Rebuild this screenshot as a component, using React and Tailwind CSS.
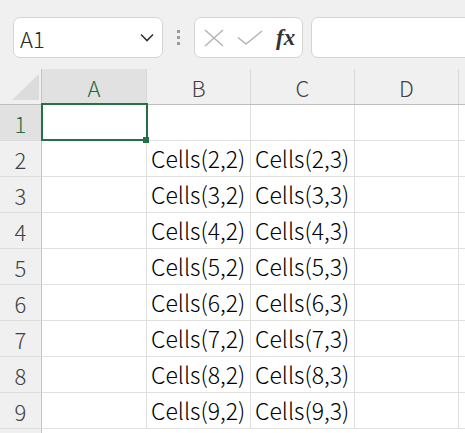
import React from "react";

const font = { fontFamily: '"Noto Sans CJK JP", "Noto Sans", sans-serif' };

const cols = [
  { key: "A", w: "w-[105px]", selected: true },
  { key: "B", w: "w-[104px]" },
  { key: "C", w: "w-[104px]" },
  { key: "D", w: "w-[104px]" },
];

const rows = [1, 2, 3, 4, 5, 6, 7, 8, 9];

const cellText = (r, c) => {
  if (r < 2) return "";
  if (c === "B") return `Cells(${r},2)`;
  if (c === "C") return `Cells(${r},3)`;
  return "";
};

const NameBox = () => (
  <div className="flex h-[41px] w-[150px] shrink-0 items-center justify-between rounded-[7px] border border-[#d4d4d4] bg-white pl-[6px] pr-[8px]">
    <span className="text-[22px] font-light leading-none text-[#262626]">A1</span>
    <svg width="14" height="9" viewBox="0 0 14 9" fill="none">
      <path d="M1 1.5 L7 7.5 L13 1.5" stroke="#333" strokeWidth="1.6" />
    </svg>
  </div>
);

const Dots = () => (
  <div className="flex h-[41px] w-[31px] shrink-0 flex-col items-center justify-center gap-[3px]">
    <span className="h-[3px] w-[3px] bg-[#9a9a9a]" />
    <span className="h-[3px] w-[3px] bg-[#9a9a9a]" />
    <span className="h-[3px] w-[3px] bg-[#9a9a9a]" />
  </div>
);

const FxBox = () => (
  <div className="flex h-[41px] w-[109px] shrink-0 items-center rounded-[7px] border border-[#d4d4d4] bg-white pl-[9px]">
    <svg width="20" height="18" viewBox="0 0 20 18" fill="none">
      <path d="M1 1 L19 17 M19 1 L1 17" stroke="#b4b4b4" strokeWidth="1.5" />
    </svg>
    <svg className="ml-[13px]" width="26" height="16" viewBox="0 0 26 16" fill="none">
      <path d="M1 7.5 L9 14 L25 1" stroke="#b4b4b4" strokeWidth="1.5" />
    </svg>
    <span
      className="ml-[13px] text-[23px] font-bold italic leading-none text-[#333]"
      style={{ fontFamily: '"Liberation Serif", "DejaVu Serif", serif' }}
    >
      fx
    </span>
  </div>
);

export default function App() {
  return (
    <div className="relative h-[433px] w-[465px] overflow-hidden bg-[#f0f0f0]" style={font}>
      {/* toolbar */}
      <div className="flex h-[69px] items-start pl-[13px] pt-[17px]">
        <NameBox />
        <Dots />
        <FxBox />
        <div className="ml-[8px] h-[41px] w-[200px] shrink-0 rounded-[7px] border border-[#d4d4d4] bg-white" />
      </div>

      {/* column headers */}
      <div className="flex h-[36px] border-b border-[#bdbdbd]">
        <div className="relative w-[42px] shrink-0 border-r border-[#c4c4c4]">
          <svg className="absolute left-[12px] top-[5px]" width="27" height="26" viewBox="0 0 27 26">
            <polygon points="27,0 27,26 0,26" fill="#dcdcdc" />
          </svg>
        </div>
        {cols.map((c) => (
          <div
            key={c.key}
            className={`${c.w} flex shrink-0 items-center justify-center border-r border-[#d9d9d9] text-[22px] font-light leading-none ${
              c.selected ? "bg-[#e1e1e1] text-[#1e6e42]" : "text-[#404040]"
            }`}
          >
            {c.key}
          </div>
        ))}
        <div className="flex-1" />
      </div>

      {/* rows */}
      {rows.map((r) => (
        <div key={r} className="flex h-[36px]">
          <div
            className={`flex w-[42px] shrink-0 items-center justify-center border-b border-r border-b-[#dcdcdc] border-r-[#c4c4c4] text-[22px] font-light leading-none ${
              r === 1 ? "bg-[#e1e1e1] text-[#1e6e42]" : "text-[#404040]"
            }`}
          >
            {r}
          </div>
          {cols.map((c) => (
            <div
              key={c.key}
              className={`${c.w} relative flex shrink-0 items-center whitespace-nowrap border-b border-r border-[#dfdfdf] bg-white pl-[4px] text-[23px] font-light leading-none text-black`}
            >
              {cellText(r, c.key)}
              {r === 1 && c.selected && (
                <>
                  <div className="absolute left-[-1px] top-[-2px] z-10 h-[38px] w-[107px] border-2 border-[#217346]" />
                  <div className="absolute left-[101px] top-[32px] z-10 h-[6px] w-[6px] bg-[#217346]" />
                </>
              )}
            </div>
          ))}
          <div className="flex-1 border-b border-[#dfdfdf] bg-white" />
        </div>
      ))}

      {/* row 10, cut by the window edge */}
      <div className="flex h-[36px]">
        <div className="w-[42px] shrink-0 border-r border-[#c4c4c4]" />
        <div className="flex-1 bg-white" />
      </div>
    </div>
  );
}
